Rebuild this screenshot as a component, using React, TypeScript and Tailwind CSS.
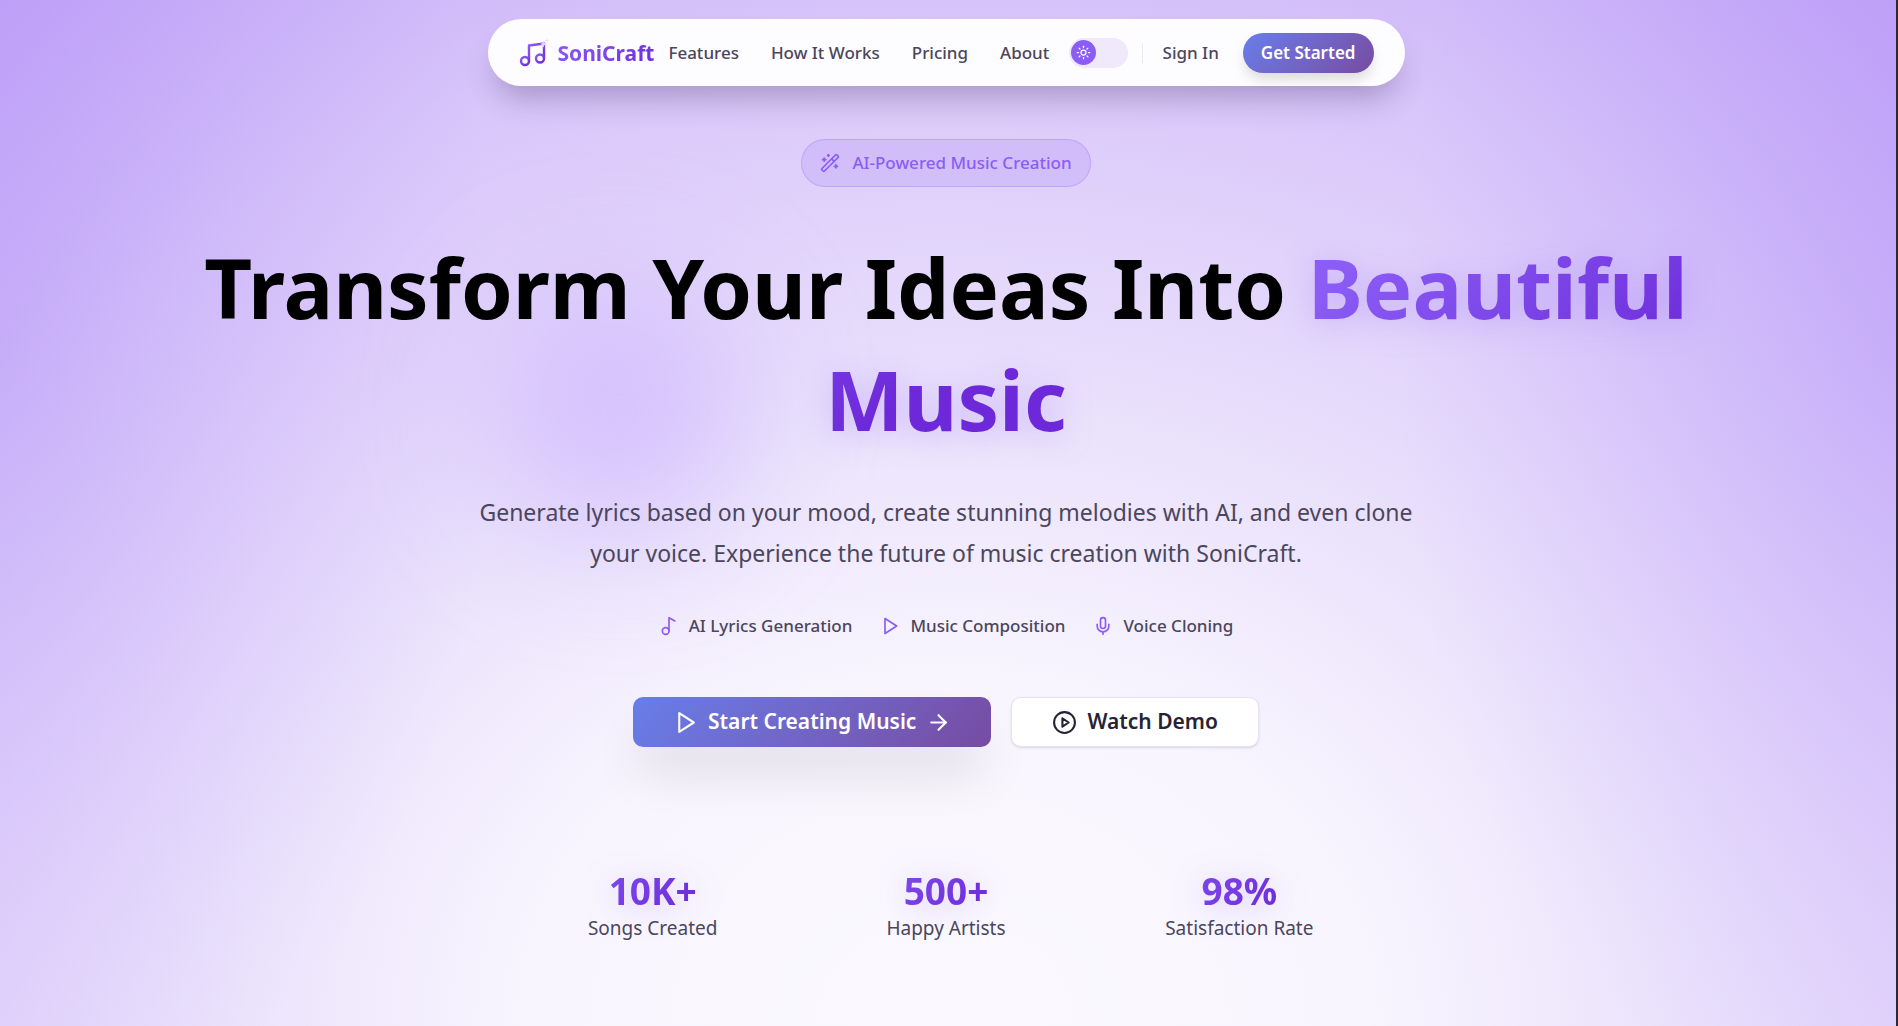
import React, { useState } from 'react';
import { ArrowRight, Mic, Music2, Sun, WandSparkles } from 'lucide-react';

const NAV_LINKS = [
  { label: 'Features', href: '#features' },
  { label: 'How It Works', href: '#how-it-works' },
  { label: 'Pricing', href: '#pricing' },
  { label: 'About', href: '#about' },
];

const STATS = [
  { value: '10K+', label: 'Songs Created' },
  { value: '500+', label: 'Happy Artists' },
  { value: '98%', label: 'Satisfaction Rate' },
];

interface IconProps {
  size: number;
  className?: string;
}

function PlayIcon({ size, className }: IconProps) {
  return (
    <svg width={size} height={size} viewBox="0 0 24 24" fill="none" stroke="currentColor" strokeWidth="2" strokeLinecap="round" strokeLinejoin="round" className={className} aria-hidden="true">
      <polygon points="6 3 20 12 6 21 6 3" />
    </svg>
  );
}

function CirclePlayIcon({ size, className }: IconProps) {
  return (
    <svg width={size} height={size} viewBox="0 0 24 24" fill="none" stroke="currentColor" strokeWidth="2" strokeLinecap="round" strokeLinejoin="round" className={className} aria-hidden="true">
      <circle cx="12" cy="12" r="10" />
      <polygon points="10 8 16 12 10 16 10 8" />
    </svg>
  );
}

function LogoIcon() {
  return (
    <svg width="32" height="32" viewBox="0 0 32 32" fill="none" aria-hidden="true">
      <defs>
        <linearGradient id="logo-gradient" x1="0" y1="0" x2="1" y2="1">
          <stop offset="0" stopColor="#8b5cf6" />
          <stop offset="1" stopColor="#6d28d9" />
        </linearGradient>
      </defs>
      <g stroke="url(#logo-gradient)" strokeWidth="2.4" strokeLinecap="round" strokeLinejoin="round">
        <path d="M11 24V8.500l15-2V21" />
        <circle cx="7" cy="24" r="4" />
        <circle cx="22" cy="21.500" r="4" />
      </g>
      <path d="M25.500 3.500l1 2.500 2.500 1-2.500 1-1 2.500-1-2.500-2.500-1 2.500-1z" fill="#e4d8fd" />
      <path d="M29 2v3M27.500 3.500h3" stroke="#ece4fe" strokeLinecap="round" />
    </svg>
  );
}

function ThemeToggle() {
  const [isDark, setIsDark] = useState(false);

  return (
    <label className="flex h-[30px] w-[59px] cursor-pointer items-center rounded-full bg-[#efe9fb] px-0.5">
      <input
        type="checkbox"
        role="switch"
        aria-label="Toggle dark mode"
        className="peer sr-only"
        checked={isDark}
        onChange={(e) => setIsDark(e.target.checked)}
      />
      <span className="flex size-[25px] items-center justify-center rounded-full bg-[#8b5cf6] text-white transition-transform peer-checked:translate-x-7">
        <Sun size={15} strokeWidth={2} />
      </span>
    </label>
  );
}

function Navbar() {
  return (
    <header className="flex justify-center px-4 pt-[19px]">
      <nav className="flex min-h-[67px] w-full max-w-[917px] flex-wrap items-center justify-between rounded-full border border-white/60 bg-white/95 pr-[30px] pl-[29px] shadow-[0_20px_30px_-8px_rgba(60,40,90,0.3)]">
        <div className="flex items-center gap-3.5">
          <a href="#" className="flex items-center gap-2">
            <LogoIcon />
            <span className="bg-linear-135 from-[#8b5cf6] to-[#6d28d9] bg-clip-text text-[21px] leading-8 font-bold text-transparent">
              SoniCraft
            </span>
          </a>
          <div className="flex items-center gap-8">
            {NAV_LINKS.map((link) => (
              <a key={link.label} href={link.href} className="text-[17px] font-medium text-[#4b465c]">
                {link.label}
              </a>
            ))}
          </div>
        </div>
        <div className="flex items-center">
          <ThemeToggle />
          <div className="ml-3.5 h-5 w-px bg-[#ebe7f3]" />
          <a href="#signin" className="ml-5 text-[17px] font-medium text-[#4b465c]">
            Sign In
          </a>
          <button
            type="button"
            className="ml-6 h-10 rounded-full bg-linear-135 from-[#667eea] to-[#764ba2] px-[18px] text-[17px] font-semibold text-white shadow-[0_8px_14px_-2px_rgba(0,0,0,0.14)]"
          >
            Get Started
          </button>
        </div>
      </nav>
    </header>
  );
}

function Hero() {
  return (
    <main className="flex flex-col items-center px-4 pt-[53px] pb-20 text-center">
      <div className="flex h-12 items-center gap-3 rounded-full border border-[#8b5cf6]/25 bg-[#8b5cf6]/15 px-[18px] text-[#8b5cf6]">
        <WandSparkles size={20} />
        <span className="text-[17px] font-medium">AI-Powered Music Creation</span>
      </div>

      <h1 className="mt-11 max-w-[1600px] text-[83px] leading-[112px] font-bold text-black">
        Transform Your Ideas Into{' '}
        <span className="bg-linear-135 from-[#8b5cf6] from-10% to-[#6d28d9] to-70% bg-clip-text text-transparent drop-shadow-[0_4px_16px_rgba(139,92,246,0.3)]">
          Beautiful Music
        </span>
      </h1>

      <p className="mt-[37px] max-w-[960px] text-[23px] leading-[41px] text-[#4b465c]">
        Generate lyrics based on your mood, create stunning melodies with AI, and even clone your voice. Experience the
        future of music creation with SoniCraft.
      </p>

      <ul className="mt-10 flex flex-wrap justify-center gap-7 text-[17px] leading-6 font-medium text-[#4b465c]">
        <li className="flex items-center gap-2.5">
          <Music2 size={20} className="text-[#8b5cf6]" />
          AI Lyrics Generation
        </li>
        <li className="flex items-center gap-2.5">
          <PlayIcon size={20} className="text-[#8b5cf6]" />
          Music Composition
        </li>
        <li className="flex items-center gap-2.5">
          <Mic size={20} className="text-[#8b5cf6]" />
          Voice Cloning
        </li>
      </ul>

      <div className="mt-[59px] flex flex-wrap justify-center gap-5">
        <button
          type="button"
          className="flex h-[50px] items-center gap-2.5 rounded-[10px] bg-linear-135 from-[#667eea] to-[#764ba2] px-10 text-[21px] font-semibold text-white shadow-[0_32px_50px_-8px_rgba(0,0,0,0.12)]"
        >
          <PlayIcon size={25} />
          Start Creating Music
          <ArrowRight size={25} />
        </button>
        <button
          type="button"
          className="flex h-[50px] items-center gap-2.5 rounded-[10px] border border-[#e8e3f2] bg-white px-10 text-[21px] font-semibold text-[#272336] shadow-sm"
        >
          <CirclePlayIcon size={25} />
          Watch Demo
        </button>
      </div>

      <dl className="mt-[121px] grid w-full max-w-[840px] grid-cols-3 gap-10">
        {STATS.map((stat) => (
          <div key={stat.label} className="flex flex-col-reverse items-center">
            <dt className="text-[19px] leading-7 text-[#4b465c]">{stat.label}</dt>
            <dd className="w-full bg-linear-135 from-[#8b5cf6] to-[#6d28d9] to-70% bg-clip-text text-[37px] leading-[46px] font-bold text-transparent drop-shadow-[0_4px_16px_rgba(139,92,246,0.3)]">
              {stat.value}
            </dd>
          </div>
        ))}
      </dl>
    </main>
  );
}

export default function App() {
  return (
    <div className="relative min-h-screen overflow-hidden border-r-2 border-[#2b2735] bg-[radial-gradient(500px_800px_at_0%_35%,rgba(139,92,246,0.2),transparent),radial-gradient(500px_800px_at_100%_35%,rgba(139,92,246,0.2),transparent),radial-gradient(1740px_1450px_at_50%_100%,#fbf9ff_0%,#f8f5fe_24%,#ece4fc_40%,#d8c5fa_69%,#c5aaf8_88%,#bb9df6_100%)] pr-1 font-['Noto_Sans','Open_Sans',sans-serif]">
      {/* soft glow behind the headline */}
      <div className="pointer-events-none absolute top-[28%] left-[26%] size-[250px] rounded-full bg-[#c4a8ff]/50 blur-3xl" />
      <div className="relative">
        <Navbar />
        <Hero />
      </div>
    </div>
  );
}
